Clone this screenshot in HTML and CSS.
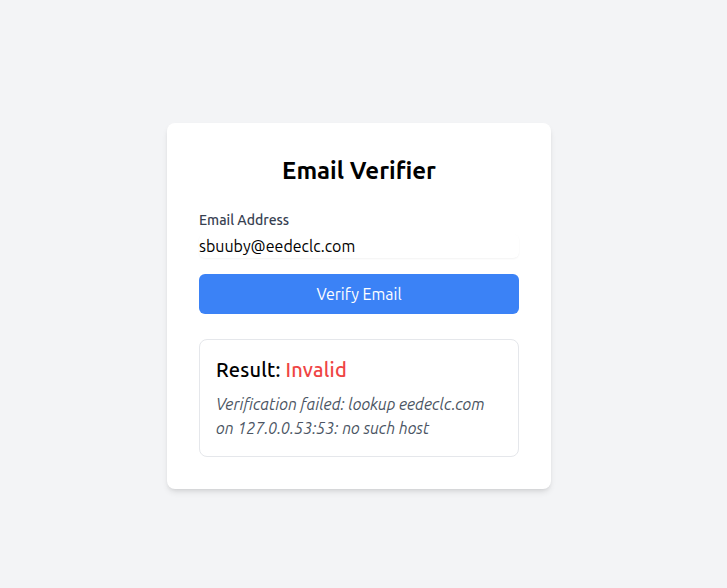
FILE: index.html
```html
<!DOCTYPE html>
<html lang="en">
<head>
<meta charset="utf-8">
<title>Email Verifier</title>
<link rel="stylesheet" href="styles.css">
</head>
<body>
<main class="page">
  <div class="card">
    <h1 class="title">Email Verifier</h1>
    <form class="form">
      <div class="field">
        <label class="label" for="email">Email Address</label>
        <input class="input" id="email" type="email" value="sbuuby@eedeclc.com">
      </div>
      <button class="btn" type="button">Verify Email</button>
    </form>
    <div class="result">
      <h2 class="result-title">Result: <span class="invalid">Invalid</span></h2>
      <p class="result-msg">Verification failed: lookup eedeclc.com on 127.0.0.53:53: no such host</p>
    </div>
  </div>
</main>
</body>
</html>
```
FILE: styles.css
```css
* { box-sizing: border-box; }
html, body { margin: 0; padding: 0; }
body {
  background: #f3f4f6;
  font-family: "Ubuntu", "Noto Sans", "Open Sans", sans-serif;
  color: #111827;
}
.page {
  min-height: 588px;
  display: flex;
  justify-content: center;
  align-items: flex-start;
  padding: 123px 9px 0 0;
}
.card {
  width: 384px;
  background: #ffffff;
  border-radius: 8px;
  padding: 32px;
  box-shadow: 0 4px 6px -1px rgba(0,0,0,0.1), 0 2px 4px -2px rgba(0,0,0,0.1);
}
.title {
  margin: 0 0 23px;
  font-size: 24px;
  line-height: 32px;
  font-weight: 700;
  text-align: center;
  color: #000;
}
.form {
  display: flex;
  flex-direction: column;
  gap: 16px;
}
.field {
  display: flex;
  flex-direction: column;
  gap: 4px;
}
.label {
  font-size: 14px;
  line-height: 20px;
  font-weight: 500;
  color: #374151;
}
.input {
  height: 24px;
  padding: 0;
  border: 0;
  border-radius: 6px;
  font-family: inherit;
  font-size: 16px;
  color: #000;
  background: #fff;
  box-shadow: 0 1px 2px 0 rgba(0,0,0,0.05);
  outline: none;
}
.btn {
  height: 40px;
  border: 0;
  border-radius: 6px;
  background: #3b82f6;
  color: #fff;
  font-family: inherit;
  font-size: 16px;
  font-weight: 400;
}
.result {
  margin-top: 25px;
  border: 1px solid #e5e7eb;
  border-radius: 8px;
  padding: 16px;
}
.result-title {
  margin: 0;
  font-size: 20px;
  line-height: 28px;
  font-weight: 500;
  letter-spacing: 0.2px;
  color: #000;
}
.invalid { color: #ef4444; }
.result-msg {
  margin: 8px 0 0;
  font-size: 16px;
  line-height: 24px;
  font-style: italic;
  color: #4b5563;
}
```
